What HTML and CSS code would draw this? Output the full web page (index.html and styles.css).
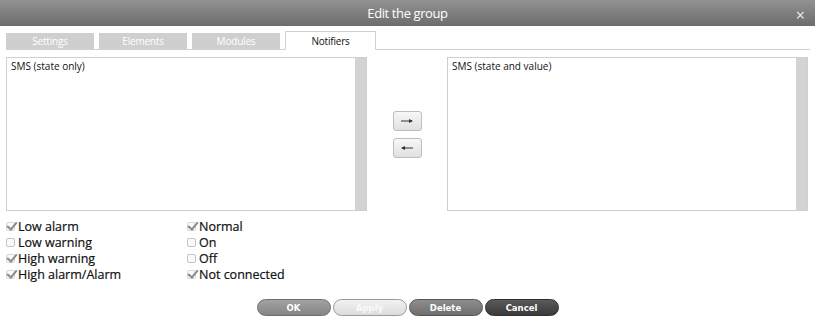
FILE: index.html
```html
<!DOCTYPE html>
<html>
<head>
<meta charset="utf-8">
<title>Edit the group</title>
<link rel="stylesheet" href="styles.css">
</head>
<body>
<div class="dialog">
  <div class="titlebar">
    <span class="title">Edit the group</span>
    <span class="close">×</span>
  </div>
  <div class="tabs">
    <div class="tab">Settings</div>
    <div class="tab">Elements</div>
    <div class="tab">Modules</div>
    <div class="tab active">Notifiers</div>
  </div>
  <div class="lists">
    <div class="listbox">
      <div class="listbody"><div class="listhead">SMS (state only)</div></div>
      <div class="scroll"></div>
    </div>
    <div class="movers">
      <button class="mover"><svg width="14" height="6" viewBox="0 0 14 6"><path d="M1 3H12" stroke="#333" stroke-width="1"/><path d="M9 1L13 3L9 5Z" fill="#333"/></svg></button>
      <button class="mover"><svg width="14" height="6" viewBox="0 0 14 6"><path d="M2 3H13" stroke="#333" stroke-width="1"/><path d="M5 1L1 3L5 5Z" fill="#333"/></svg></button>
    </div>
    <div class="listbox">
      <div class="listbody"><div class="listhead">SMS (state and value)</div></div>
      <div class="scroll"></div>
    </div>
  </div>
  <div class="checks">
    <div class="col">
      <label class="chk"><span class="box on"></span>Low alarm</label>
      <label class="chk"><span class="box"></span>Low warning</label>
      <label class="chk"><span class="box on"></span>High warning</label>
      <label class="chk"><span class="box on"></span>High alarm/Alarm</label>
    </div>
    <div class="col">
      <label class="chk"><span class="box on"></span>Normal</label>
      <label class="chk"><span class="box"></span>On</label>
      <label class="chk"><span class="box"></span>Off</label>
      <label class="chk"><span class="box on"></span>Not connected</label>
    </div>
  </div>
  <div class="actions">
    <button class="btn ok">OK</button>
    <button class="btn apply">Apply</button>
    <button class="btn del">Delete</button>
    <button class="btn cancel">Cancel</button>
  </div>
</div>
</body>
</html>
```
FILE: styles.css
```css
html, body {
  margin: 0;
  padding: 0;
  background: #fff;
}
body {
  width: 815px;
  height: 332px;
  overflow: hidden;
  font-family: "Open Sans", "Noto Sans", sans-serif;
  color: #222;
}
.dialog {
  display: flex;
  flex-direction: column;
}
.titlebar {
  height: 26px;
  background: linear-gradient(#929292, #6c6c6c);
  display: flex;
  align-items: center;
  justify-content: center;
  position: relative;
  color: #fff;
}
.title {
  font-size: 13px;
  letter-spacing: -0.4px;
}
.close {
  position: absolute;
  right: 10px;
  top: 4px;
  font-size: 16px;
  color: #eee;
}
.tabs {
  display: flex;
  align-items: flex-end;
  gap: 5px;
  margin: 5px 5px 0 6px;
  border-bottom: 1px solid #d0d0d0;
  height: 18px;
}
.tab {
  width: 88px;
  height: 16px;
  background: #cfcfcf;
  color: #fff;
  font-size: 10px;
  display: flex;
  align-items: center;
  justify-content: center;
  letter-spacing: -0.2px;
}
.tab.active {
  background: #fff;
  color: #111;
  height: 17px;
  border: 1px solid #d0d0d0;
  border-bottom: 1px solid #fff;
  margin-bottom: -1px;
  width: 89px;
}
.lists {
  display: flex;
  margin: 7px 7px 0 6px;
  height: 154px;
}
.listbox {
  width: 361px;
  display: flex;
  border: 1px solid #cfcfcf;
  box-sizing: border-box;
}
.listbody {
  flex: 1;
}
.listhead {
  font-size: 10px;
  padding: 1px 0 0 4px;
  color: #111;
}
.scroll {
  width: 11px;
  background: #d3d3d3;
}
.movers {
  width: 80px;
  display: flex;
  flex-direction: column;
  align-items: center;
  justify-content: center;
  gap: 7px;
}
.mover {
  width: 29px;
  height: 20px;
  border: 1px solid #bdbdbd;
  border-radius: 3px;
  background: linear-gradient(#f7f7f7, #e0e0e0);
  padding: 0;
  display: flex;
  align-items: center;
  justify-content: center;
}
.mover svg {
  display: block;
}
.checks {
  display: flex;
  margin: 7px 0 0 6px;
}
.col {
  display: flex;
  flex-direction: column;
  width: 181px;
}
.chk {
  display: flex;
  align-items: center;
  height: 16px;
  line-height: 15px;
  font-size: 12.5px;
  color: #111;
  -webkit-text-stroke: 0.2px #111;
}
.box {
  width: 9px;
  height: 9px;
  border: 1px solid #c4c4c4;
  border-radius: 2px;
  margin-right: 3px;
  position: relative;
  box-sizing: border-box;
  background: #fafafa;
}
.box.on {
  border-color: #d6d6d6;
}
.box.on::after {
  content: "";
  position: absolute;
  left: 2px;
  top: -3px;
  width: 4px;
  height: 8px;
  border-right: 2px solid #8a8a8a;
  border-bottom: 2px solid #8a8a8a;
  transform: rotate(40deg);
}
.actions {
  display: flex;
  justify-content: center;
  gap: 2px;
  margin-top: 17px;
}
.btn {
  width: 74px;
  height: 17px;
  border-radius: 9px;
  font-family: "DejaVu Sans", sans-serif;
  font-weight: bold;
  font-size: 8.5px;
  color: #fff;
  padding: 0;
  border: 1px solid #666;
}
.ok {
  background: linear-gradient(#a2a2a2, #858585);
  border-color: #6e6e6e;
}
.apply {
  background: linear-gradient(#f2f2f2, #dcdcdc);
  border-color: #9a9a9a;
  color: #fafafa;
}
.del {
  background: linear-gradient(#8e8e8e, #6e6e6e);
  border-color: #555;
}
.cancel {
  background: linear-gradient(#5a5a5a, #3a3a3a);
  border-color: #2e2e2e;
}
```
